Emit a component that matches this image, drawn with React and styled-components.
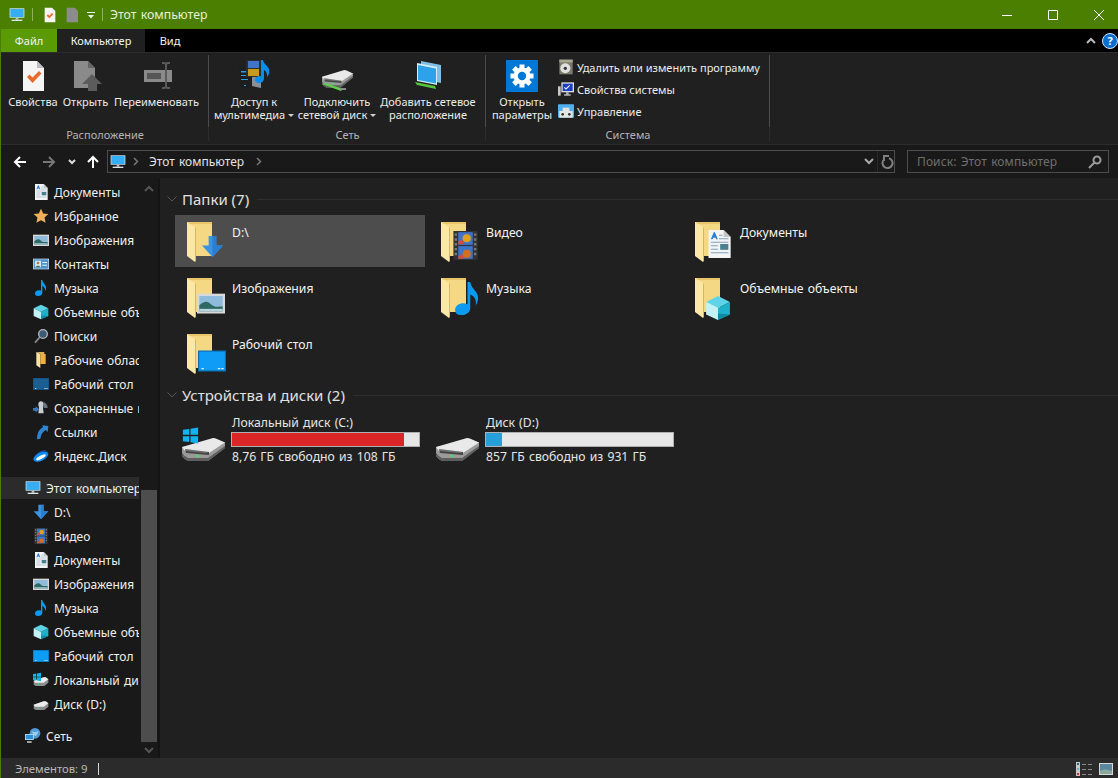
import React from "react";
import styled, { createGlobalStyle } from "styled-components";

const GlobalStyle = createGlobalStyle`
  html, body { margin: 0; padding: 0; height: 100%; background: #202020; overflow: hidden; }
  #root { height: 100%; }
  * { box-sizing: border-box; }
`;

const FONT = `"Noto Sans", "Open Sans", sans-serif`;

const Window = styled.div`
  display: flex;
  flex-direction: column;
  height: 778px;
  width: 1118px;
  font-family: ${FONT};
  font-size: 11.5px;
  color: #f2f2f2;
  background: #202020;
  border-left: 1px solid #4b7f02;
  overflow: hidden;
`;

const TitleBar = styled.div`
  display: flex;
  align-items: center;
  height: 29px;
  flex: none;
  background: #4b7f02;
  padding-left: 8px;
`;

const TitleSep = styled.span`
  width: 1px;
  height: 13px;
  background: #8fb35a;
  margin: 0 ${p => p.$right}px 0 ${p => p.$left}px;
`;

const QuickSlot = styled.span`
  display: flex;
  margin-right: ${p => p.$gap}px;
`;

const TitleText = styled.span`
  font-size: 12.3px;
  word-spacing: 1px;
  color: #e8f0dc;
  flex: 1;
`;

const WinButtons = styled.div`
  display: flex;
  align-items: center;
  gap: 34px;
  padding-right: 13px;
`;

const WinButton = styled.div`
  display: flex;
  width: 12px;
  height: 12px;
`;

const TabStrip = styled.div`
  display: flex;
  align-items: stretch;
  height: 23px;
  flex: none;
  background: #000;
`;

const Tab = styled.div`
  display: flex;
  align-items: center;
  justify-content: center;
  width: ${p => p.$w}px;
  font-size: 11px;
  background: ${p => (p.$file ? "#5a9a05" : p.$active ? "#202020" : "transparent")};
  color: #f4f4f4;
`;

const TabEnd = styled.div`
  margin-left: auto;
  display: flex;
  align-items: center;
  gap: 6px;
`;

const HelpBadge = styled.div`
  width: 16px;
  height: 16px;
  border-radius: 50%;
  background: #0a6fd0;
  border: 1px solid #cfe4f8;
  font-size: 11px;
  font-weight: 700;
  line-height: 14px;
  text-align: center;
  color: #fff;
`;

const Ribbon = styled.div`
  display: flex;
  height: 93px;
  flex: none;
  background: #202020;
  border-top: 1px solid #2c2c2c;
  border-bottom: 1px solid #2c2c2c;
`;

const Group = styled.div`
  display: flex;
  flex-direction: column;
  width: ${p => p.$w}px;
  padding-left: ${p => p.$pad}px;
  background:
    linear-gradient(#4b4b4b, #4b4b4b) right 2px / 1px 72px no-repeat,
    linear-gradient(#2c2c2c, #2c2c2c) right 2px / 1px 86px no-repeat;
`;

const GroupBody = styled.div`
  display: flex;
  flex: 1;
`;

const GroupLabel = styled.div`
  height: 18px;
  line-height: 18px;
  font-size: 11px;
  text-align: center;
  color: #b4b4b4;
  margin-left: ${p => -p.$pad}px;
`;

const BigButton = styled.div`
  display: flex;
  flex-direction: column;
  align-items: center;
  width: ${p => p.$w}px;
  padding-top: 7px;
  color: #ececec;
`;

const BigIcon = styled.div`
  height: 32px;
  margin-bottom: 3px;
`;

const BigLabel = styled.div`
  font-size: 11px;
  line-height: 13px;
  text-align: center;
  white-space: nowrap;
`;

const Caret = styled.span`
  display: inline-block;
  width: 0;
  height: 0;
  margin-left: 3px;
  vertical-align: 2px;
  border-left: 3px solid transparent;
  border-right: 3px solid transparent;
  border-top: 3px solid #d0d0d0;
`;

const SmallList = styled.div`
  display: flex;
  flex-direction: column;
  margin-left: 4px;
  padding-top: 3px;
`;

const SmallItem = styled.div`
  display: flex;
  align-items: center;
  gap: 3px;
  height: 22px;
  font-size: 11px;
  white-space: nowrap;
  color: #ececec;
`;

const NavBar = styled.div`
  display: flex;
  align-items: flex-start;
  height: 33px;
  flex: none;
  padding-top: 5px;
  background: #191919;
`;

const NavArrows = styled.div`
  display: flex;
  align-items: center;
  height: 23px;
  width: 106px;
  padding-left: 12px;
`;

const AddressBox = styled.div`
  display: flex;
  align-items: center;
  width: 788px;
  height: 23px;
  border: 1px solid #4d4d4d;
  font-size: 12px;
  word-spacing: 1px;
  padding-left: 2px;
  color: #e4e4e4;
`;

const Crumb = styled.span`
  display: flex;
  margin: 0 ${p => p.$right}px 0 ${p => p.$left}px;
`;

const AddressEnd = styled.div`
  display: flex;
  align-items: center;
  margin-left: auto;
  height: 100%;
`;

const AddressDivider = styled.span`
  width: 1px;
  height: 100%;
  background: #2a2a2a;
  margin: 0 2px 0 3px;
`;

const SearchBox = styled.div`
  display: flex;
  align-items: center;
  justify-content: space-between;
  width: 202px;
  height: 23px;
  margin-left: 12px;
  border: 1px solid #4d4d4d;
  padding: 0 6px 0 9px;
  font-size: 12px;
  letter-spacing: 0.1px;
  word-spacing: 1px;
  color: #6f6f6f;
`;

const Body = styled.div`
  display: flex;
  flex: 1;
  min-height: 0;
`;

const Sidebar = styled.div`
  display: flex;
  width: 159px;
  flex: none;
  background: #191919;
  border-right: 2px solid #141414;
`;

const Tree = styled.div`
  width: 138px;
  flex: none;
  padding-top: 2px;
  overflow: hidden;
`;

const TreeRow = styled.div`
  display: flex;
  align-items: center;
  gap: 5px;
  height: ${p => (p.$top ? 22 : 24)}px;
  padding-left: ${p => (p.$top ? 24 : 32)}px;
  margin-top: ${p => p.$gap || 0}px;
  margin-bottom: ${p => (p.$current ? 1 : 0)}px;
  background: ${p => (p.$current ? "#2b2b2b" : "transparent")};
  font-size: 12px;
  word-spacing: 1px;
  white-space: nowrap;
  color: #f0f0f0;
  svg { flex: none; }
`;

const ScrollTrack = styled.div`
  display: flex;
  flex-direction: column;
  width: 16px;
  margin-left: 2px;
  padding-top: 2px;
`;

const ScrollArrow = styled.div`
  display: flex;
  align-items: center;
  justify-content: center;
  height: 16px;
`;

const ScrollGap = styled.div`
  flex: 1;
`;

const ScrollThumb = styled.div`
  height: 252px;
  background: #4d4d4d;
`;

const Content = styled.div`
  flex: 1;
  min-width: 0;
  background: #202020;
  padding-top: 11px;
`;

const SectionHead = styled.div`
  display: flex;
  align-items: center;
  height: 20px;
  padding-left: 7px;
  margin-top: ${p => p.$gap || 0}px;
  margin-bottom: ${p => p.$bottom}px;
  font-size: 15px;
  color: #e0e0e0;
`;

const SectionTitle = styled.span`
  margin-left: 5px;
`;

const SectionLine = styled.span`
  flex: 1;
  height: 1px;
  background: #2e2e2e;
  margin-left: 8px;
`;

const TileGrid = styled.div`
  display: grid;
  grid-template-columns: repeat(3, 250px);
  grid-auto-rows: 52px;
  gap: 4px;
  padding-left: 15px;
`;

const FolderTile = styled.div`
  display: flex;
  padding: 3px 0 0 8px;
  background: ${p => (p.$selected ? "#4d4d4d" : "transparent")};
`;

const TileName = styled.div`
  margin: 7px 0 0 1px;
  line-height: 16px;
  font-size: 12.2px;
  word-spacing: 1px;
  color: #f4f4f4;
`;

const DriveTile = styled.div`
  display: flex;
  align-items: flex-start;
  padding-left: 7px;
`;

const DriveIconBox = styled.div`
  width: 49px;
  padding-top: 9px;
  flex: none;
`;

const DriveInfo = styled.div`
  width: 189px;
  line-height: 16px;
  color: #e6e6e6;
`;

const DriveName = styled.div`
  padding-left: 1px;
  font-size: 12.2px;
  word-spacing: 1px;
`;

const DriveFree = styled.div`
  padding-left: 1px;
  font-size: 12.2px;
  word-spacing: 1px;
`;

const UsageBar = styled.div`
  height: 15px;
  margin: 1px 0 2px;
  background: #e6e6e6;
  border: 1px solid #b0b0b0;
`;

const UsageFill = styled.div`
  height: 100%;
  background: ${p => p.$color};
`;

const StatusBar = styled.div`
  display: flex;
  align-items: center;
  height: 20px;
  flex: none;
  margin-left: -1px;
  padding: 1px 0 0 15px;
  background: #2b2b2b;
  font-size: 11.3px;
  color: #b8b8b8;
`;

const StatusTick = styled.span`
  width: 1px;
  height: 12px;
  background: #d8d8d8;
  margin-left: 10px;
`;

const StatusViews = styled.div`
  display: flex;
  align-items: center;
  gap: 5px;
  margin-left: auto;
  margin-right: 5px;
`;

const NavArrow = styled.span`
  display: flex;
  margin-right: ${p => p.$gap}px;
`;

// --- drawings, all on a 24 unit box so the folder overlays and the tree can share them

const ArrowGlyph = () => (
  <>
    <path d="M8 1h8v10h7L12 23 1 11h7z" fill="#3a94e2" />
    <path d="M12 1h4v10h7L12 23z" fill="#2a7fd0" />
  </>
);

const PictureGlyph = () => (
  <>
    <rect x="0" y="4" width="24" height="17" fill="#d8d8d8" />
    <rect x="2" y="6" width="20" height="13" fill="#8fbcdc" />
    <path d="M2 14c4-4 7-4 10-1s6 2 10 2v4H2z" fill="#2f6a62" />
    <path d="M2 17h20v2H2z" fill="#b8d4de" />
  </>
);

const DesktopGlyph = ({ dark }) => (
  <>
    <rect x="0" y="3" width="24" height="18" fill={dark ? "#14507c" : "#0a6fb4"} />
    <rect x="1" y="4" width="22" height="16" fill={dark ? "#1b5f92" : "#0f9cf7"} />
    <path d="M20 18h2v1h-2zM17 18h2v1h-2zM3 18h2v1H3z" fill="#e6f2fb" />
  </>
);

const VideoGlyph = () => (
  <>
    <rect x="2" y="0" width="20" height="24" fill="#333" />
    <rect x="6" y="1" width="12" height="10.5" fill="#3f74c8" />
    <rect x="6" y="12.5" width="12" height="10.5" fill="#3f74c8" />
    <circle cx="13" cy="6" r="3.4" fill="#e0a020" />
    <circle cx="13" cy="19" r="3.4" fill="#d07020" />
    <path d="M6 9l3-2 2 4H6zM6 21l3-2 2 4H6z" fill="#d84a3a" />
    <path d="M3 2h2v2H3zM3 6h2v2H3zM3 10h2v2H3zM3 14h2v2H3zM3 18h2v2H3zM19 2h2v2h-2zM19 6h2v2h-2zM19 10h2v2h-2zM19 14h2v2h-2zM19 18h2v2h-2z" fill="#777" />
  </>
);

const NoteGlyph = () => (
  <path d="M12 0h2c.5 3 2 4.500 4 7 2 2.500 2.500 6 0 10 .500-4-.5-6.500-4-8v10c0 3-3 5-6.500 5S3 22.500 3 20s3-4.500 6-4.500c1 0 2 .2 3 .7z" fill="#0a9bf0" />
);

const DocGlyph = () => (
  <>
    <path d="M3 0h13l6 6v18H3z" fill="#f4f4f4" />
    <path d="M16 0l6 6h-6z" fill="#c4c4c4" />
    <path d="M5 8l2.500-6h1L11 8H9.500l-.4-1.300H7L6.500 8z" fill="#2a80d0" />
    <path d="M12 4h3v1h-3zM12 7h8v1h-8zM5 10h15v1H5zM5 13h6v1H5zM5 16h6v1H5zM5 19h15v1H5z" fill="#7fa0bc" />
    <rect x="13" y="12" width="7" height="5" fill="#4a7f90" />
  </>
);

const CubeGlyph = () => (
  <>
    <path d="M12 1l11 5.500L12 12 1 6.500z" fill="#5fd4e8" />
    <path d="M1 6.500L12 12v11L1 18z" fill="#c4f1f6" />
    <path d="M23 6.500L12 12v11l11-5z" fill="#1fb1cb" />
    <path d="M12 17l11 1-11 5z" fill="#0f8ba4" />
  </>
);

const StarGlyph = () => (
  <path d="M12 1l3.300 7.200 7.700.9-5.700 5.300 1.600 7.800L12 18.300l-6.900 3.900 1.600-7.800L1 9.100l7.700-.9z" fill="#eeb05a" />
);

const ContactGlyph = () => (
  <>
    <rect x="0" y="4" width="24" height="16" fill="#cfe3f5" />
    <rect x="1" y="5" width="22" height="14" fill="#4a93cf" />
    <rect x="3" y="7" width="9" height="10" fill="#d8e8f2" />
    <circle cx="7.500" cy="10.500" r="2" fill="#a87a50" />
    <path d="M4 17c0-3 7-3 7 0z" fill="#47703c" />
    <path d="M14 9h7v1.500h-7zM14 13h7v1.500h-7z" fill="#eaf3fa" />
  </>
);

const SearchGlyph = () => (
  <>
    <path d="M3 22l7-8" stroke="#8a8a8a" strokeWidth="2.500" />
    <circle cx="15" cy="9" r="6.500" fill="#3c5a78" stroke="#b8b8b8" strokeWidth="2" />
  </>
);

const CloudFolderGlyph = () => (
  <>
    <path d="M5 0l6 3v21l-6-4z" fill="#f8e3a0" />
    <path d="M11 3h8v15h-8z" fill="#eeb040" />
    <path d="M5 0h12v3H11z" fill="#d8b060" />
  </>
);

const PawnGlyph = () => (
  <>
    <path d="M12 2c3 0 4 2.500 4 4.500S15 10 15 12l1 8H8l1-8c0-2-1-3.500-1-5.500S9 2 12 2z" fill="#c8ccd4" />
    <path d="M16 3c4 2 6 5 6 9h-6z" fill="#6a7280" />
    <path d="M0 12h4V9l5 5-5 5v-3H0z" fill="#3c78bc" />
  </>
);

const LinkGlyph = () => (
  <path d="M14 2l9 1-1 9-3-3c-5 3-7 7-8 13l-5 1C6 14 9 8 15 5z" fill="#2f83d0" />
);

const YandexGlyph = () => (
  <>
    <path d="M0 18C2 10 10 3 23 3c-8 1-15 6-18 12z" fill="#1a5fd0" />
    <ellipse cx="12" cy="13" rx="12" ry="6" transform="rotate(-28 12 13)" fill="#0d8cf5" />
    <ellipse cx="12" cy="14" rx="8" ry="2.500" transform="rotate(-28 12 14)" fill="#fff" />
  </>
);

const PcGlyph = () => (
  <>
    <rect x="1" y="2" width="22" height="14" fill="#d8eefc" />
    <rect x="2" y="3" width="20" height="12" fill="#38aef2" />
    <path d="M10 16h4v3h-4z" fill="#b8c4cc" />
    <path d="M4 19h16v2H4z" fill="#dfe6ea" />
  </>
);

const HddGlyph = () => (
  <>
    <path d="M1 13l15-5h3l4 3v5l-6 5H4l-3-2z" fill="#8c8c8c" />
    <path d="M1 13l15-5h3l4 3-7 5H3z" fill="#ececec" />
    <rect x="7" y="17" width="2" height="2" fill="#46e46e" />
  </>
);

const WinGlyph = () => (
  <path d="M0 3l5-.700V7H0zM6 2.100l6-.900V7H6zM0 8h5v4.700L0 12zM6 8h6v5.800l-6-.900z" fill="#0fb4f0" />
);

const NetGlyph = () => (
  <>
    <circle cx="15" cy="8" r="8" fill="#4f9ad8" />
    <path d="M10 4c3 3 8 2 10 0-1 3-1 6-4 8-3-1-5-5-6-8z" fill="#9ccdeb" />
    <rect x="0" y="9" width="13" height="9" fill="#d8eefc" />
    <rect x="1" y="10" width="11" height="7" fill="#2b92da" />
    <path d="M3 20h7v2H3z" fill="#dfe6ea" />
  </>
);

const Small = ({ children, size = 16 }) => (
  <svg width={size} height={size} viewBox="0 0 24 24">{children}</svg>
);

const FolderIcon = ({ children, at }) => (
  <svg width="48" height="48" viewBox="0 0 48 48">
    <path d="M4 4h25v34H12z" fill="#f5d884" />
    <path d="M4 4h25v2H4z" fill="#e8c46a" />
    <path d="M4 4l8 5v35l-8-6z" fill="#fbe7a6" />
    <path d="M12 9v35l1-1V10z" fill="#d9b65f" />
    <svg x={at[0]} y={at[1]} width={at[2]} height={at[2]} viewBox="0 0 24 24">{children}</svg>
  </svg>
);

// drive body, drawn on a 43x23 box and placed by the caller
const DriveBody = () => (
  <>
    <path d="M0 9v9q2 3 6 5h20L43 10V4z" fill="#9a9a9a" />
    <path d="M6 23h20L43 10v-2L26 20H6q-4-2-6-5v3q2 3 6 5z" fill="#5e5e5e" />
    <path d="M0 9L31 0q2 0 4 1l8 3.500L27 15 3 13z" fill="#e9e9e9" />
    <path d="M3 11l24 3v3L4 15z" fill="#454545" />
    <path d="M3 11l24 3-3 1L4 13z" fill="#f4f4f4" opacity=".25" />
    <rect x="14" y="17" width="3" height="2" fill="#3fe06a" />
  </>
);

const DriveIcon = ({ windows }) => (
  <svg width="43" height="38" viewBox="0 0 43 38">
    <g transform="translate(0 14)"><DriveBody /></g>
    {windows && (
      <svg x="0" y="2" width="17" height="19" viewBox="0 0 12 15">
        <WinGlyph />
      </svg>
    )}
  </svg>
);

const Big = ({ children }) => (
  <svg width="32" height="32" viewBox="0 0 32 32">{children}</svg>
);

const PropsIcon = () => (
  <Big>
    <path d="M6 1h14l7 7v23H6z" fill="#f5f5f5" />
    <path d="M20 1l7 7h-7z" fill="#bdbdbd" />
    <path d="M10 17l2.500-2.500 3 3L22 11l2.500 2.500-9 9.500z" fill="#ea6a2a" />
  </Big>
);

const OpenIcon = () => (
  <Big>
    <path d="M4 1h14l7 7v20H4z" fill="#8a8a8a" />
    <path d="M18 1l7 7h-7z" fill="#666" />
    <path d="M22 14l10 10h-5v7h-9v-7h-6z" fill="#5c5c5c" />
  </Big>
);

const RenameIcon = () => (
  <Big>
    <path d="M3 10h28v12H3z" fill="#8a8a8a" />
    <path d="M6 13h14v6H6z" fill="#565656" />
    <path d="M21 3h2q2 0 2 2v21q0 2-2 2h-2M29 3h-2q-2 0-2 2M29 28h-2q-2 0-2-2" stroke="#5a5a5a" strokeWidth="2" fill="none" />
  </Big>
);

const MediaIcon = () => (
  <Big>
    <path d="M1 8l12-3 10 3v20l-10-1-10 1z" fill="#1e1e1e" />
    <path d="M14 7l9 2v19l-9-2z" fill="#8a8f96" />
    <path d="M3 11h9v1.500H3zM3 15h9v1H3zM3 19h7v1H3zM6 25h2v1H6z" fill="#2f9fe8" />
    <rect x="8" y="0" width="15" height="17" fill="#2c2c2c" />
    <rect x="10" y="1" width="11" height="7" fill="#3f74c8" />
    <rect x="10" y="9" width="11" height="7" fill="#c89a20" />
    <path d="M23 0h2c0 3 4 5 6 9 1 3 0 6-2 8 .500-3-1-6-3-7v8c0 3-2 5-5 5s-4-2-4-3.500 2-3.500 4-3.500c1 0 2 .2 2 .5z" fill="#0a8cf0" />
  </Big>
);

const NetDriveIcon = () => (
  <Big>
    <g transform="translate(1 10) scale(.72 .76)"><DriveBody /></g>
    <path d="M1 24l3-1 18 6-2 2z" fill="#5fd04a" />
    <path d="M19 28h6v2h-6z" fill="#8a8a8a" />
  </Big>
);

const NetLocationIcon = () => (
  <Big>
    <path d="M9 1l20 4v18l-20-4z" fill="#7fbfe6" />
    <path d="M5 3l20 4v18L5 21z" fill="#d8eefc" />
    <path d="M6 5l18 3.500v15L6 20z" fill="#2da2ea" />
    <path d="M3 22l20 4 1 3-19-4z" fill="#55c43c" />
  </Big>
);

const GearIcon = () => (
  <Big>
    <rect width="32" height="32" fill="#0078d7" />
    {[0, 45, 90, 135].map(a => (
      <rect key={a} x="13.500" y="4.500" width="5" height="23" fill="#fff" transform={`rotate(${a} 16 16)`} />
    ))}
    <circle cx="16" cy="16" r="8.500" fill="#fff" />
    <circle cx="16" cy="16" r="4.200" fill="#0078d7" />
  </Big>
);

const UninstallIcon = () => (
  <Small>
    <rect x="2" y="1" width="20" height="22" fill="#7c7c6a" />
    <rect x="2" y="1" width="20" height="4" fill="#a8a890" />
    <circle cx="11" cy="14" r="7.500" fill="#e0e0e0" />
    <circle cx="11" cy="14" r="2.500" fill="#333" />
  </Small>
);

const SysPropsIcon = () => (
  <Small>
    <rect x="0" y="8" width="4" height="14" fill="#c8c8c8" />
    <rect x="5" y="2" width="19" height="15" fill="#dcdcdc" />
    <rect x="7" y="4" width="15" height="11" fill="#1c3ccc" />
    <path d="M10 9l2 2 5-5 1 1-6 6-3-3z" fill="#fff" />
    <path d="M12 17h4v3h-4zM9 20h10v2H9z" fill="#b4b4b4" />
  </Small>
);

const ManageIcon = () => (
  <Small>
    <rect x="0" y="2" width="24" height="20" rx="1" fill="#4fb0f0" />
    <rect x="2" y="12" width="20" height="10" fill="#e4e4e4" />
    <rect x="7" y="7" width="10" height="5" fill="#e4e4e4" />
    <circle cx="7" cy="17" r="2" fill="#333" />
    <circle cx="17" cy="17" r="2" fill="#333" />
  </Small>
);

const Line = ({ w = 12, h = 12, d, color = "#fff", sw = 1, fill = "none" }) => (
  <svg width={w} height={h} viewBox={`0 0 ${w} ${h}`}>
    <path d={d} stroke={color} strokeWidth={sw} fill={fill} />
  </svg>
);

const MagnifierIcon = () => (
  <Line w={14} h={14} color="#9a9a9a" sw={2} d="M1 13l5-5M9 1.500a3.500 3.500 0 1 0 .01 0z" />
);

const RefreshIcon = () => (
  <svg width="14" height="14" viewBox="0 0 14 14">
    <path d="M9 3.200a5 5 0 1 1-5.500 1.800" stroke="#808080" strokeWidth="2" fill="none" />
    <path d="M3 0h6v2H5v4H3z" fill="#808080" />
  </svg>
);

const QuickDropdown = () => (
  <svg width="8" height="8" viewBox="0 0 8 8">
    <path d="M0 1h8v1H0zM1 4h6L4 7.500z" fill="#eee" />
  </svg>
);

const treeTop = [
  ["Документы", <DocGlyph />],
  ["Избранное", <StarGlyph />],
  ["Изображения", <PictureGlyph />],
  ["Контакты", <ContactGlyph />],
  ["Музыка", <NoteGlyph />],
  ["Объемные объекты", <CubeGlyph />],
  ["Поиски", <SearchGlyph />],
  ["Рабочие области", <CloudFolderGlyph />],
  ["Рабочий стол", <DesktopGlyph dark />],
  ["Сохраненные игры", <PawnGlyph />],
  ["Ссылки", <LinkGlyph />],
  ["Яндекс.Диск", <YandexGlyph />],
];

const treePc = [
  ["D:\\", <ArrowGlyph />],
  ["Видео", <VideoGlyph />],
  ["Документы", <DocGlyph />],
  ["Изображения", <PictureGlyph />],
  ["Музыка", <NoteGlyph />],
  ["Объемные объекты", <CubeGlyph />],
  ["Рабочий стол", <DesktopGlyph />],
  ["Локальный диск (C:)", <><HddGlyph /><WinGlyph /></>],
  ["Диск (D:)", <HddGlyph />],
];

// at: overlay x, y and size inside the 48 unit folder
const folders = [
  { name: "D:\\", glyph: <ArrowGlyph />, at: [18, 17, 23], selected: true },
  { name: "Видео", glyph: <VideoGlyph />, at: [14, 13, 29] },
  { name: "Документы", glyph: <DocGlyph />, at: [14, 12, 28] },
  { name: "Изображения", glyph: <PictureGlyph />, at: [14, 15, 28] },
  { name: "Музыка", glyph: <NoteGlyph />, at: [14, 8, 33] },
  { name: "Объемные объекты", glyph: <CubeGlyph />, at: [14, 21, 26] },
  { name: "Рабочий стол", glyph: <DesktopGlyph />, at: [15, 17, 28] },
];

const drives = [
  { name: "Локальный диск (C:)", free: "8,76 ГБ свободно из 108 ГБ", used: 92, color: "#da2626", windows: true },
  { name: "Диск (D:)", free: "857 ГБ свободно из 931 ГБ", used: 8.5, color: "#26a0da" },
];

export default function App() {
  return (
    <Window>
      <GlobalStyle />
      <TitleBar>
        <Small><PcGlyph /></Small>
        <TitleSep $left={7} $right={9} />
        <QuickSlot $gap={6}>
          <Small>
            <path d="M4 1h11l5 5v17H4z" fill="#f5f5f5" />
            <path d="M7 13l2-2 2 2 4-4 2 2-6 6z" fill="#ea6a2a" />
          </Small>
        </QuickSlot>
        <QuickSlot $gap={7}>
          <Small>
            <path d="M4 1h12l5 5v17H4z" fill="#8c8c8c" />
          </Small>
        </QuickSlot>
        <QuickDropdown />
        <TitleSep $left={7} $right={7} />
        <TitleText>Этот компьютер</TitleText>
        <WinButtons>
          <WinButton><Line d="M1 6.500h10" /></WinButton>
          <WinButton><Line d="M1.500 1.500h9v9h-9z" /></WinButton>
          <WinButton><Line d="M1 1l10 10M11 1L1 11" /></WinButton>
        </WinButtons>
      </TitleBar>

      <TabStrip>
        <Tab $file $w={56}>Файл</Tab>
        <Tab $active $w={88}>Компьютер</Tab>
        <Tab $w={50}>Вид</Tab>
        <TabEnd>
          <Line w={10} h={7} color="#bbb" sw={2} d="M1 6l4-4 4 4" />
          <HelpBadge>?</HelpBadge>
        </TabEnd>
      </TabStrip>

      <Ribbon>
        <Group $w={208} $pad={5}>
          <GroupBody>
            <BigButton $w={54}><BigIcon><PropsIcon /></BigIcon><BigLabel>Свойства</BigLabel></BigButton>
            <BigButton $w={51}><BigIcon><OpenIcon /></BigIcon><BigLabel>Открыть</BigLabel></BigButton>
            <BigButton $w={91}><BigIcon><RenameIcon /></BigIcon><BigLabel>Переименовать</BigLabel></BigButton>
          </GroupBody>
          <GroupLabel $pad={5}>Расположение</GroupLabel>
        </Group>
        <Group $w={277} $pad={5}>
          <GroupBody>
            <BigButton $w={80}><BigIcon><MediaIcon /></BigIcon><BigLabel>Доступ к<br />мультимедиа<Caret /></BigLabel></BigButton>
            <BigButton $w={86}><BigIcon><NetDriveIcon /></BigIcon><BigLabel>Подключить<br />сетевой диск<Caret /></BigLabel></BigButton>
            <BigButton $w={96}><BigIcon><NetLocationIcon /></BigIcon><BigLabel>Добавить сетевое<br />расположение</BigLabel></BigButton>
          </GroupBody>
          <GroupLabel $pad={5}>Сеть</GroupLabel>
        </Group>
        <Group $w={284} $pad={4}>
          <GroupBody>
            <BigButton $w={64}><BigIcon><GearIcon /></BigIcon><BigLabel>Открыть<br />параметры</BigLabel></BigButton>
            <SmallList>
              <SmallItem><UninstallIcon />Удалить или изменить программу</SmallItem>
              <SmallItem><SysPropsIcon />Свойства системы</SmallItem>
              <SmallItem><ManageIcon />Управление</SmallItem>
            </SmallList>
          </GroupBody>
          <GroupLabel $pad={4}>Система</GroupLabel>
        </Group>
      </Ribbon>

      <NavBar>
        <NavArrows>
          <NavArrow $gap={17}><Line w={13} h={12} sw={2} d="M13 6H2M7 1L2 6l5 5" /></NavArrow>
          <NavArrow $gap={12}><Line w={13} h={12} sw={2} color="#777" d="M0 6h11M6 1l5 5-5 5" /></NavArrow>
          <NavArrow $gap={11}><Line w={8} h={6} sw={2} color="#ddd" d="M1 1l3 3 3-3" /></NavArrow>
          <NavArrow $gap={0}><Line w={12} h={13} sw={2} d="M6 13V2M1 7l5-5 5 5" /></NavArrow>
        </NavArrows>
        <AddressBox>
          <Small><PcGlyph /></Small>
          <Crumb $left={7} $right={10}><Line w={6} h={9} color="#777" sw={1.500} d="M1 1l3.500 3.500L1 8" /></Crumb>
          Этот компьютер
          <Crumb $left={12} $right={0}><Line w={6} h={9} color="#777" sw={1.500} d="M1 1l3.500 3.500L1 8" /></Crumb>
          <AddressEnd>
            <Line w={10} h={7} color="#aaa" sw={2} d="M1 1l4 4 4-4" />
            <AddressDivider />
            <RefreshIcon />
          </AddressEnd>
        </AddressBox>
        <SearchBox>
          Поиск: Этот компьютер
          <MagnifierIcon />
        </SearchBox>
      </NavBar>

      <Body>
        <Sidebar>
          <Tree>
            {treeTop.map(([label, glyph]) => (
              <TreeRow key={label}><Small>{glyph}</Small>{label}</TreeRow>
            ))}
            <TreeRow $top $current $gap={9}><Small><PcGlyph /></Small>Этот компьютер</TreeRow>
            {treePc.map(([label, glyph]) => (
              <TreeRow key={label}><Small>{glyph}</Small>{label}</TreeRow>
            ))}
            <TreeRow $top $gap={9}><Small><NetGlyph /></Small>Сеть</TreeRow>
          </Tree>
          <ScrollTrack>
            <ScrollArrow><Line w={10} h={7} color="#555" sw={2} d="M1 6l4-4 4 4" /></ScrollArrow>
            <ScrollGap />
            <ScrollThumb />
            <ScrollArrow><Line w={10} h={7} color="#555" sw={2} d="M1 1l4 4 4-4" /></ScrollArrow>
          </ScrollTrack>
        </Sidebar>

        <Content>
          <SectionHead $bottom={6}>
            <Line w={10} h={6} color="#555" d="M0.500 0.500l4.500 4.500 4.500-4.500" />
            <SectionTitle>Папки (7)</SectionTitle>
            <SectionLine />
          </SectionHead>
          <TileGrid>
            {folders.map(f => (
              <FolderTile key={f.name} $selected={f.selected}>
                <FolderIcon at={f.at}>{f.glyph}</FolderIcon>
                <TileName>{f.name}</TileName>
              </FolderTile>
            ))}
          </TileGrid>
          <SectionHead $gap={6} $bottom={10}>
            <Line w={10} h={6} color="#555" d="M0.500 0.500l4.500 4.500 4.500-4.500" />
            <SectionTitle>Устройства и диски (2)</SectionTitle>
            <SectionLine />
          </SectionHead>
          <TileGrid>
            {drives.map(d => (
              <DriveTile key={d.name}>
                <DriveIconBox><DriveIcon windows={d.windows} /></DriveIconBox>
                <DriveInfo>
                  <DriveName>{d.name}</DriveName>
                  <UsageBar>
                    <UsageFill $color={d.color} style={{ width: `${d.used}%` }} />
                  </UsageBar>
                  <DriveFree>{d.free}</DriveFree>
                </DriveInfo>
              </DriveTile>
            ))}
          </TileGrid>
        </Content>
      </Body>

      <StatusBar>
        Элементов: 9
        <StatusTick />
        <StatusViews>
          <svg width="18" height="14" viewBox="0 0 18 14">
            <rect x="0" y="0" width="4" height="14" fill="#c8c8c8" />
            <rect x="1" y="1" width="2" height="2" fill="#2a6a8a" />
            <rect x="1" y="6" width="2" height="2" fill="#7ac" />
            <rect x="1" y="11" width="2" height="2" fill="#d03030" />
            <path d="M6 2h4v1H6zM12 2h4v1h-4zM6 7h4v1H6zM12 7h4v1h-4zM6 12h4v1H6zM12 12h4v1h-4z" fill="#8a8a8a" />
          </svg>
          <svg width="14" height="12" viewBox="0 0 14 12">
            <rect width="14" height="12" fill="#d8d8d8" />
            <rect x="1" y="1" width="12" height="10" fill="#5a86a0" />
            <path d="M1 8c3-2 6-2 12 0v3H1z" fill="#8aa89c" />
          </svg>
        </StatusViews>
      </StatusBar>
    </Window>
  );
}
